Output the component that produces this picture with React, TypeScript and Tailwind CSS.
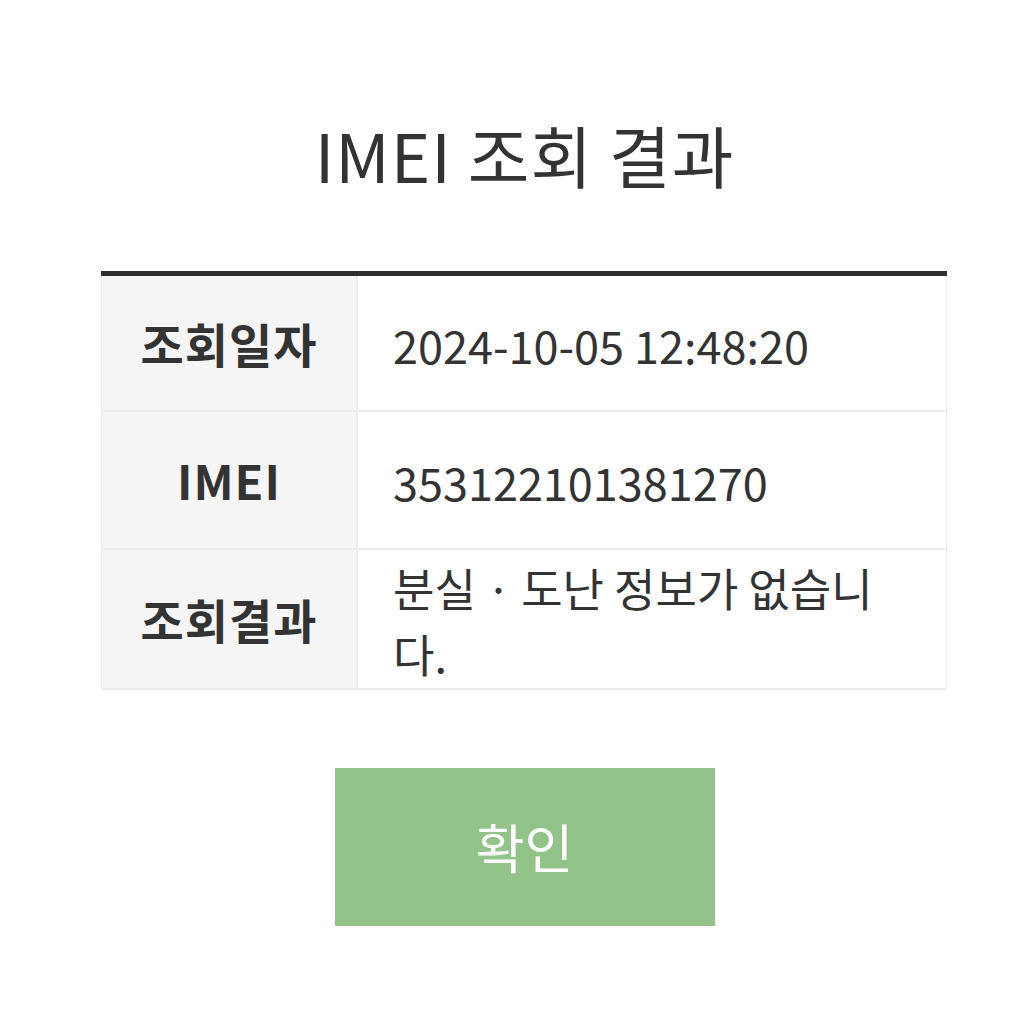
export default function App() {
  const rows = [
    { label: "조회일자", value: "2024-10-05 12:48:20", h: "h-[134px]" },
    { label: "IMEI", value: "353122101381270", h: "h-[136px]" },
    { label: "조회결과", value: "분실 · 도난 정보가 없습니다.", h: "h-[138px]" },
  ];

  return (
    <div
      className="w-[1029px] h-[1029px] bg-white flex flex-col items-center text-[#333]"
      style={{ fontFamily: '"Noto Sans CJK KR", "Noto Sans", sans-serif' }}
    >
      <h1 className="mt-[108px] ml-[20px] text-[67px] leading-[92px] font-normal tracking-[1px]">IMEI 조회 결과</h1>

      {/* result table */}
      <div className="mt-[71px] w-[846px] ml-[19px] border-t-[5px] border-[#2e2e2e] bg-[#ececec] flex flex-col gap-[2px] pb-[2px] px-[1px]">
        {rows.map((row) => (
          <div key={row.label} className="grid grid-cols-[254px_1fr] gap-[2px]">
            <div className={`bg-[#f5f5f5] flex items-center justify-center text-[47px] font-bold tracking-[1px] ${row.h}`}>
              {row.label}
            </div>
            <div className="bg-white flex items-center pl-[35px] pr-[60px] pt-[4px] text-[45px] leading-[66px]">
              {row.value}
            </div>
          </div>
        ))}
      </div>

      <button className="mt-[78px] ml-[20px] w-[380px] h-[158px] bg-[#92c48a] text-white text-[53px]">
        확인
      </button>
    </div>
  );
}
